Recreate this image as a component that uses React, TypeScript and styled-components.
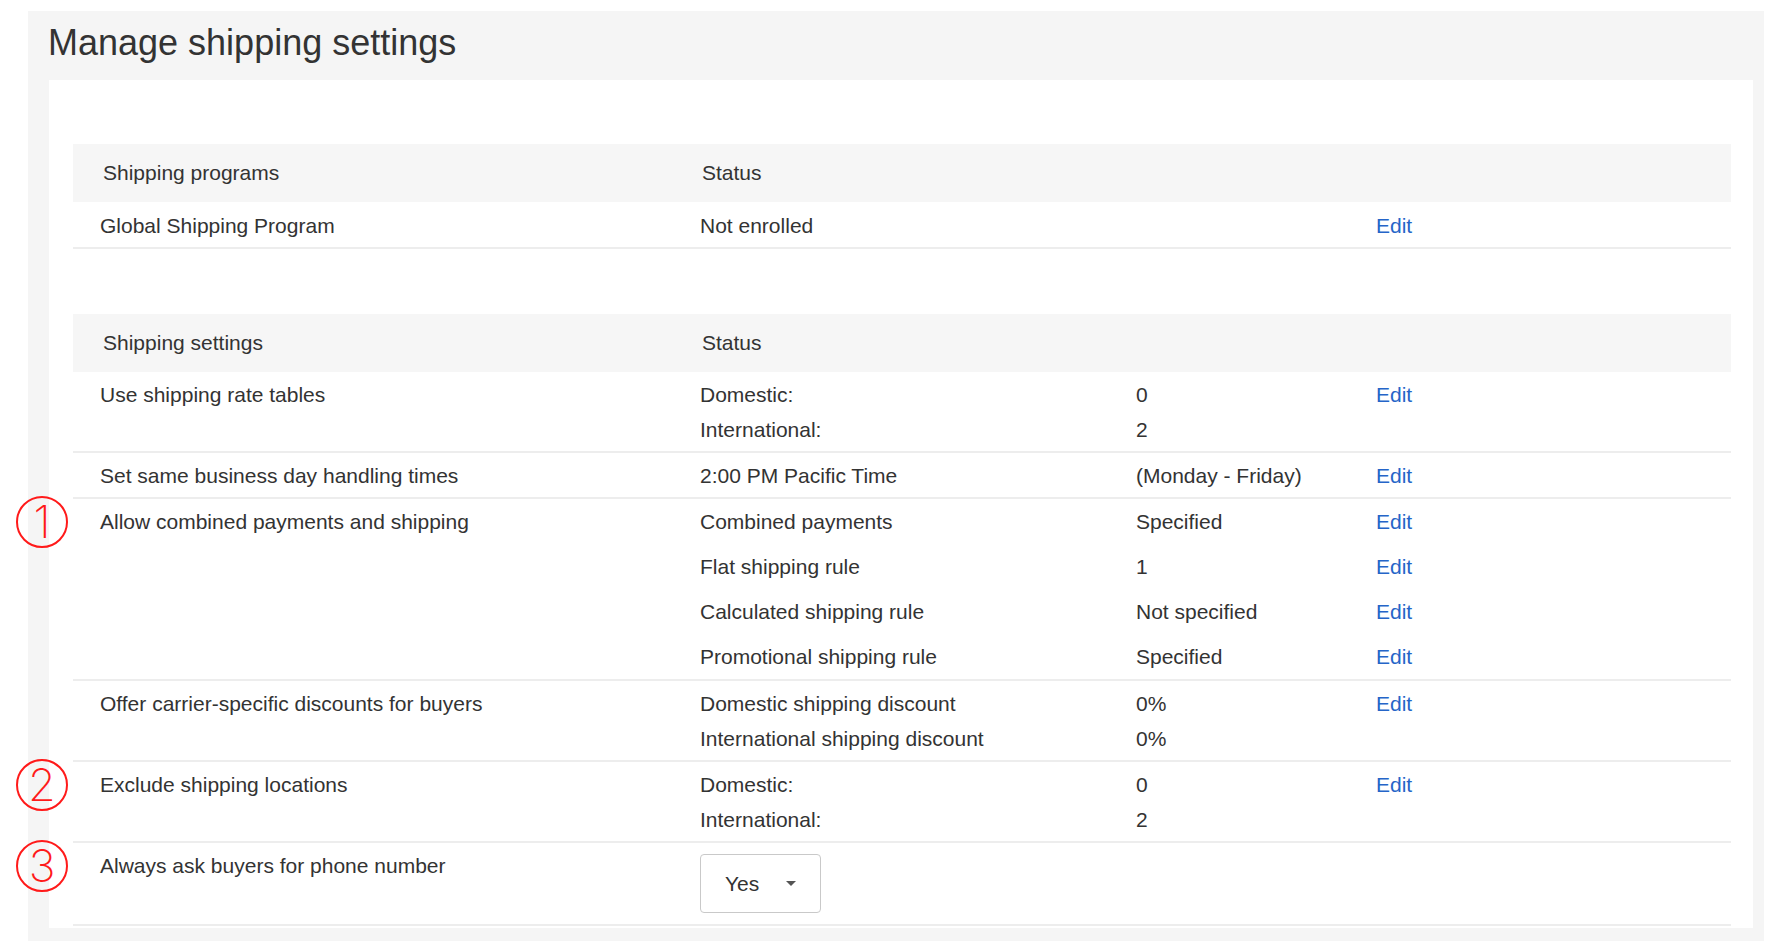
import React from "react";
import styled, { createGlobalStyle } from "styled-components";

const GlobalStyle = createGlobalStyle`
  html, body { margin: 0; padding: 0; background: #ffffff; }
  body {
    font-family: "Liberation Sans", Arial, Helvetica, sans-serif;
    color: #333333;
    -webkit-font-smoothing: antialiased;
  }
  * { box-sizing: border-box; }
`;

const Page = styled.div`
  padding: 11px 10px 5px 28px;
`;

const Panel = styled.section`
  background: #f5f5f5;
  padding: 0 11px 13px 21px;
`;

const Title = styled.h1`
  margin: 0 0 16px -1px;
  padding: 10px 0 0 0;
  font-size: 36px;
  line-height: 43px;
  font-weight: 400;
  color: #333333;
`;

const Card = styled.div`
  background: #ffffff;
  padding: 64px 22px 2px 24px;
`;

const Table = styled.div<{ $gap?: number }>`
  display: flex;
  flex-direction: column;
  margin-bottom: ${(p) => p.$gap ?? 0}px;
`;

const HeaderRow = styled.div`
  display: grid;
  grid-template-columns: 599px 1fr;
  align-items: center;
  height: 58px;
  padding-left: 30px;
  background: #f6f6f6;
  font-size: 21px;
  color: #333333;
`;

const Row = styled.div<{ $h: number; $pt: number; $pb: number }>`
  position: relative;
  display: grid;
  grid-template-columns: 600px 436px 240px 1fr;
  grid-auto-rows: minmax(${(p) => p.$h}px, auto);
  align-items: center;
  padding: ${(p) => p.$pt}px 0 ${(p) => p.$pb}px 27px;
  border-bottom: 2px solid #ededed;
  font-size: 21px;
  line-height: ${(p) => p.$h}px;
  color: #333333;
`;

const Label = styled.div`
  position: relative;
  grid-column: 1;
  align-self: start;
`;

const Cell = styled.div<{ $col: number }>`
  grid-column: ${(p) => p.$col};
  white-space: nowrap;
`;

const EditLink = styled.a`
  grid-column: 4;
  justify-self: start;
  color: #2565c8;
  text-decoration: none;
  cursor: pointer;
`;

const Badge = styled.span`
  position: absolute;
  left: -84px;
  top: calc(50% - 26px);
  width: 52px;
  height: 52px;
  border: 2px solid #ff1a1a;
  border-radius: 50%;
  display: flex;
  align-items: center;
  justify-content: center;
  color: #ff1a1a;
  font-family: "Inter", "DejaVu Sans", sans-serif;
  font-weight: 200;
  font-size: 45px;
  line-height: 1;
  padding-bottom: 1px;
`;

const SelectBox = styled.button`
  grid-column: 2;
  align-self: start;
  justify-self: start;
  margin-top: 6px;
  display: inline-flex;
  align-items: center;
  width: 121px;
  height: 59px;
  padding: 0 0 0 24px;
  border: 1px solid #c9c9c9;
  border-radius: 4px;
  background: #ffffff;
  font-family: "Liberation Sans", Arial, sans-serif;
  font-size: 21px;
  line-height: 1;
  color: #333333;
  cursor: pointer;
`;

const Caret = styled.span`
  margin-left: 27px;
  width: 0;
  height: 0;
  border-left: 5px solid transparent;
  border-right: 5px solid transparent;
  border-top: 5px solid #555555;
`;

type Line = { status: string; value?: string; edit?: boolean };
type RowData = {
  label: string;
  lines: Line[];
  h: number;
  pt: number;
  pb: number;
  badge?: string;
};

const programRows: RowData[] = [
  {
    label: "Global Shipping Program",
    h: 35,
    pt: 6,
    pb: 4,
    lines: [{ status: "Not enrolled", edit: true }],
  },
];

const settingRows: RowData[] = [
  {
    label: "Use shipping rate tables",
    h: 35,
    pt: 5,
    pb: 4,
    lines: [
      { status: "Domestic:", value: "0", edit: true },
      { status: "International:", value: "2" },
    ],
  },
  {
    label: "Set same business day handling times",
    h: 35,
    pt: 5,
    pb: 4,
    lines: [{ status: "2:00 PM Pacific Time", value: "(Monday - Friday)", edit: true }],
  },
  {
    label: "Allow combined payments and shipping",
    h: 45,
    pt: 0,
    pb: 0,
    badge: "1",
    lines: [
      { status: "Combined payments", value: "Specified", edit: true },
      { status: "Flat shipping rule", value: "1", edit: true },
      { status: "Calculated shipping rule", value: "Not specified", edit: true },
      { status: "Promotional shipping rule", value: "Specified", edit: true },
    ],
  },
  {
    label: "Offer carrier-specific discounts for buyers",
    h: 35,
    pt: 5,
    pb: 4,
    lines: [
      { status: "Domestic shipping discount", value: "0%", edit: true },
      { status: "International shipping discount", value: "0%" },
    ],
  },
  {
    label: "Exclude shipping locations",
    h: 35,
    pt: 5,
    pb: 4,
    badge: "2",
    lines: [
      { status: "Domestic:", value: "0", edit: true },
      { status: "International:", value: "2" },
    ],
  },
];

function DataRow({ row }: { row: RowData }) {
  return (
    <Row $h={row.h} $pt={row.pt} $pb={row.pb}>
      <Label>
        {row.badge && <Badge>{row.badge}</Badge>}
        {row.label}
      </Label>
      {row.lines.map((line, i) => (
        <React.Fragment key={i}>
          <Cell $col={2}>{line.status}</Cell>
          {line.value !== undefined && <Cell $col={3}>{line.value}</Cell>}
          {line.edit && <EditLink>Edit</EditLink>}
        </React.Fragment>
      ))}
    </Row>
  );
}

export default function App() {
  return (
    <>
      <GlobalStyle />
      <Page>
        <Panel>
          <Title>Manage shipping settings</Title>
          <Card>
            <Table $gap={65}>
              <HeaderRow>
                <span>Shipping programs</span>
                <span>Status</span>
              </HeaderRow>
              {programRows.map((r) => (
                <DataRow key={r.label} row={r} />
              ))}
            </Table>
            <Table>
              <HeaderRow>
                <span>Shipping settings</span>
                <span>Status</span>
              </HeaderRow>
              {settingRows.map((r) => (
                <DataRow key={r.label} row={r} />
              ))}
              <Row $h={35} $pt={5} $pb={11}>
                <Label>
                  <Badge>3</Badge>
                  Always ask buyers for phone number
                </Label>
                <SelectBox type="button">
                  Yes
                  <Caret />
                </SelectBox>
              </Row>
            </Table>
          </Card>
        </Panel>
      </Page>
    </>
  );
}
